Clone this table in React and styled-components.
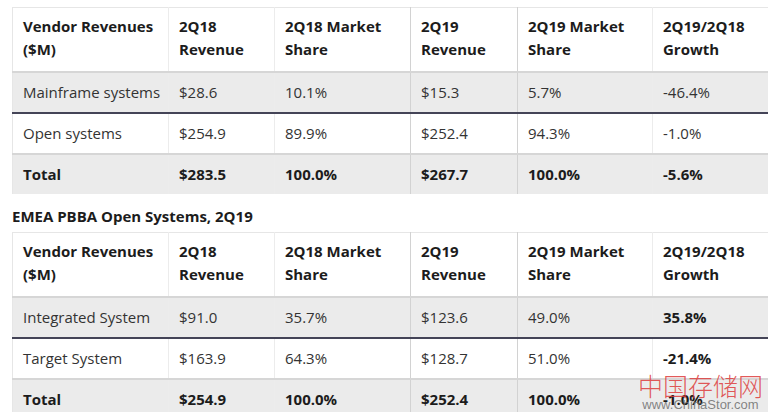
import React from 'react'
import styled, { createGlobalStyle } from 'styled-components'

const GlobalStyle = createGlobalStyle`
  html, body {
    margin: 0;
    background: #ffffff;
    font-family: "Open Sans", "Noto Sans", sans-serif;
    overflow: hidden;
  }
`

const Page = styled.div`
  position: relative;
  width: 768px;
  height: 412px;
  padding: 7px 0 0 12px;
  box-sizing: border-box;
  overflow: hidden;
`

const Caption = styled.div`
  margin: 11px 0 4px;
  font-size: 15px;
  line-height: 23px;
  font-weight: 700;
  color: #1c1c1c;
`

const Table = styled.table`
  width: 756px;
  table-layout: fixed;
  border-collapse: collapse;
  font-size: 15px;
  line-height: 23px;
  color: #2e2e2e;
  border-top: 1px solid #e6e6e6;
  border-left: 1px solid #e6e6e6;
`

const Row = styled.tr`
  background: ${p => (p.$shade ? '#ebebeb' : '#ffffff')};
  border-top: 2px solid ${p => (p.$dark ? '#444457' : '#d6d6d6')};
`

const HeadRow = styled.tr`
  background: #ffffff;
`

const Th = styled.th`
  padding: 7px 10px 10px;
  text-align: left;
  vertical-align: top;
  font-weight: 700;
  color: #1c1c1c;
  border-right: 1px solid ${p => (p.$strong ? '#d2d2d2' : '#ececec')};
`

const Td = styled.td`
  padding: 8px 10px;
  vertical-align: middle;
  white-space: nowrap;
  font-weight: ${p => (p.$bold ? 700 : 400)};
  color: ${p => (p.$bold ? '#1c1c1c' : '#333333')};
  border-right: 1px solid ${p => (p.$strong ? '#d2d2d2' : '#ececec')};
`

const Watermark = styled.div`
  position: absolute;
  right: 5px;
  bottom: 1px;
  display: flex;
  flex-direction: column;
  align-items: center;
  pointer-events: none;
`

const MarkCn = styled.div`
  font-family: "Noto Sans CJK SC", sans-serif;
  font-weight: 300;
  font-size: 25px;
  line-height: 26px;
  color: rgba(221, 60, 60, 0.85);
`

const MarkEn = styled.div`
  font-family: "Liberation Sans", Arial, sans-serif;
  font-size: 13px;
  line-height: 13px;
  color: rgba(110, 110, 110, 0.85);
`

const widths = [156, 106, 136, 107, 135, 116]
const strongCols = [2, 3]

const headers = [
  ['Vendor Revenues', '($M)'],
  ['2Q18', 'Revenue'],
  ['2Q18 Market', 'Share'],
  ['2Q19', 'Revenue'],
  ['2Q19 Market', 'Share'],
  ['2Q19/2Q18', 'Growth'],
]

const table1 = [
  { cells: ['Mainframe systems', '$28.6', '10.1%', '$15.3', '5.7%', '-46.4%'] },
  { cells: ['Open systems', '$254.9', '89.9%', '$252.4', '94.3%', '-1.0%'] },
  { cells: ['Total', '$283.5', '100.0%', '$267.7', '100.0%', '-5.6%'], total: true },
]

const table2 = [
  { cells: ['Integrated System', '$91.0', '35.7%', '$123.6', '49.0%', '35.8%'], boldLast: true },
  { cells: ['Target System', '$163.9', '64.3%', '$128.7', '51.0%', '-21.4%'], boldLast: true },
  { cells: ['Total', '$254.9', '100.0%', '$252.4', '100.0%', '-1.0%'], total: true },
]

function RevenueTable({ rows }) {
  return (
    <Table>
      <colgroup>
        {widths.map((w, i) => <col key={i} style={{ width: w }} />)}
      </colgroup>
      <thead>
        <HeadRow>
          {headers.map((h, i) => (
            <Th key={i} $strong={strongCols.includes(i)}>
              {h[0]}<br />{h[1]}
            </Th>
          ))}
        </HeadRow>
      </thead>
      <tbody>
        {rows.map((r, ri) => (
          <Row key={ri} $shade={ri !== 1} $dark={ri === 1}>
            {r.cells.map((c, ci) => (
              <Td
                key={ci}
                $strong={strongCols.includes(ci)}
                $bold={r.total || (r.boldLast && ci === 5)}
              >
                {c}
              </Td>
            ))}
          </Row>
        ))}
      </tbody>
    </Table>
  )
}

export default function App() {
  return (
    <Page>
      <GlobalStyle />
      <RevenueTable rows={table1} />
      <Caption>EMEA PBBA Open Systems, 2Q19</Caption>
      <RevenueTable rows={table2} />
      <Watermark>
        <MarkCn>中国存储网</MarkCn>
        <MarkEn>www.ChinaStor.com</MarkEn>
      </Watermark>
    </Page>
  )
}
